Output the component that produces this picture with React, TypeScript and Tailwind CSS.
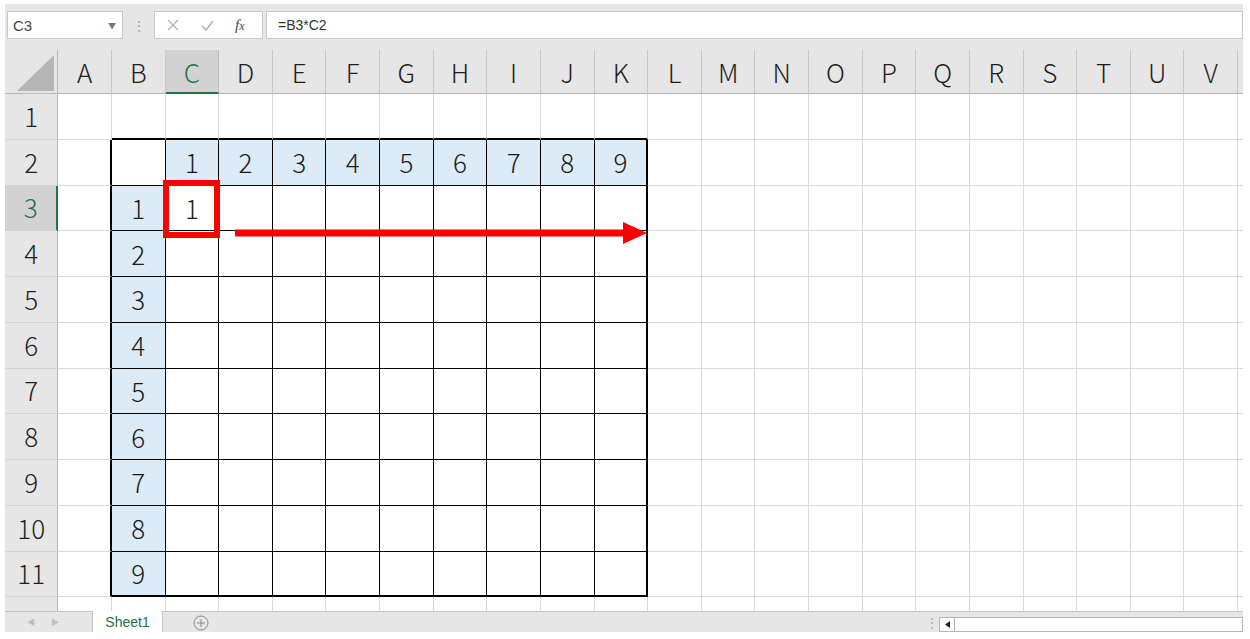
import React from "react";

const COLS = "ABCDEFGHIJKLMNOPQRSTUVW".split("");
const ROWS = [1, 2, 3, 4, 5, 6, 7, 8, 9, 10, 11, 12];
const GRID = "border-[#dadada]";

// table sits in B2:K11, header row 2 and header column B shaded blue
function cellClass(r: number, c: number) {
  const inTable = r >= 2 && r <= 11 && c >= 1 && c <= 10;
  let right = `border-r ${GRID}`;
  let bottom = `border-b ${GRID}`;
  if (inTable) {
    right = c === 10 ? "border-r-2 border-r-black" : "border-r border-r-black";
    bottom = r === 11 ? "border-b-2 border-b-black" : "border-b border-b-black";
  } else {
    if (c === 0 && r >= 2 && r <= 11) right = "border-r-2 border-r-black";
    if (r === 1 && c >= 1 && c <= 10) bottom = "border-b-2 border-b-black";
  }
  const blue =
    (r === 2 && c >= 2 && c <= 10) || (c === 1 && r >= 3 && r <= 11)
      ? "bg-[#ddebf7]"
      : "";
  return `relative flex h-full w-[53.64px] shrink-0 items-center justify-center box-border ${right} ${bottom} ${blue}`;
}

function cellText(r: number, c: number) {
  if (r === 2 && c >= 2 && c <= 10) return String(c - 1);
  if (c === 1 && r >= 3 && r <= 11) return String(r - 2);
  if (r === 3 && c === 2) return "1";
  return "";
}

export default function App() {
  return (
    <div className="h-[639px] w-[1250px] overflow-hidden bg-white pl-[5px] pr-[7px] pt-[4px] font-['Noto_Sans_CJK_JP','Liberation_Sans',sans-serif] text-[#1a1a1a]">
      {/* Formula bar */}
      <div className="flex h-[46px] items-start bg-[#e6e6e6] pt-[7px]">
        <div className="ml-[2px] flex h-[28px] w-[116px] items-center justify-between border border-[#c8c8c8] bg-white pl-[5px] pr-[6px] pt-[2px]">
          <span className="font-['Liberation_Sans',sans-serif] text-[15px] text-[#444]">
            C3
          </span>
          <span className="text-[8px] text-[#777]">▼</span>
        </div>
        <div className="flex h-[28px] w-[31px] items-center justify-center text-[14px] text-[#a8a8a8]">
          ⋮
        </div>
        <div className="flex h-[28px] w-[109px] items-center border border-[#c8c8c8] bg-white">
          <svg className="ml-[12px]" width="12" height="12" viewBox="0 0 12 12" stroke="#b4b4b4" strokeWidth="1.3" fill="none">
            <line x1="1" y1="1" x2="11" y2="11" />
            <line x1="11" y1="1" x2="1" y2="11" />
          </svg>
          <svg className="ml-[22px]" width="13" height="11" viewBox="0 0 13 11" stroke="#b4b4b4" strokeWidth="1.5" fill="none">
            <polyline points="1,6 5,10 12,1" />
          </svg>
          <span className="ml-[21px] font-['Liberation_Serif',serif] text-[15px] italic text-[#444]">
            f<span className="text-[12px]">x</span>
          </span>
        </div>
        <div className="ml-[3px] flex h-[28px] flex-1 items-center border border-[#c8c8c8] bg-white pl-[11px]">
          <span className="font-['Liberation_Sans',sans-serif] text-[14px] text-[#333]">
            =B3*C2
          </span>
        </div>
      </div>

      {/* Column headers */}
      <div className="flex h-[44px] overflow-hidden bg-[#e6e6e6] font-light">
        <div className="flex h-full w-[53.3px] shrink-0 items-end justify-end border-b border-r border-[#b8b8b8] pb-[2px] pr-[3px]">
          <svg width="37" height="36" viewBox="0 0 37 36">
            <polygon points="37,0 37,36 0,36" fill="#b5b5b5" />
          </svg>
        </div>
        {COLS.map((col, c) =>
          c === 2 ? (
            <div
              key={col}
              className="flex h-full w-[53.64px] shrink-0 items-center justify-center border-b-2 border-r border-b-[#217346] border-r-[#c0c0c0] bg-[#d2d2d2] text-[26px] text-[#217346]"
            >
              {col}
            </div>
          ) : (
            <div
              key={col}
              className="flex h-full w-[53.64px] shrink-0 items-center justify-center border-b border-r border-b-[#b0b0b0] border-r-[#c8c8c8] text-[26px] text-[#1f1f1f]"
            >
              {col}
            </div>
          )
        )}
      </div>

      {/* Sheet body */}
      <div className="relative h-[517px] overflow-hidden font-light">
        {ROWS.map((r) => (
          <div key={r} className="flex h-[45.75px]">
            {r === 3 ? (
              <div className="flex h-full w-[53.3px] shrink-0 items-center justify-center border-b border-r-2 border-b-[#d0d0d0] border-r-[#217346] bg-[#d2d2d2] pb-[2px] text-[26px] text-[#217346]">
                {r}
              </div>
            ) : (
              <div className="flex h-full w-[53.3px] shrink-0 items-center justify-center border-b border-r border-b-[#d4d4d4] border-r-[#b8b8b8] bg-[#e6e6e6] pb-[2px] text-[26px] text-[#1f1f1f]">
                {r}
              </div>
            )}
            {COLS.map((col, c) => (
              <div key={col} className={cellClass(r, c)}>
                <span className="text-[26px] leading-none">{cellText(r, c)}</span>
                {r === 3 && c === 2 && (
                  <div className="absolute -bottom-[8px] -left-[3px] -right-[2px] -top-[6px] z-10 border-[6px] border-[#ff0000]" />
                )}
              </div>
            ))}
          </div>
        ))}

        {/* Red arrow */}
        <svg
          className="absolute left-[230px] top-[127px] z-10"
          width="412"
          height="24"
          viewBox="0 0 412 24"
        >
          <rect x="0" y="8.5" width="390" height="7" fill="#ff0000" />
          <polygon points="388,1 412,12 388,23" fill="#ff0000" />
        </svg>
      </div>

      {/* Sheet tabs */}
      <div className="flex h-[21px] border-t border-[#c4c4c4] bg-[#e6e6e6]">
        <div className="flex w-[88px] items-center border-r border-[#c4c4c4] pl-[22px] text-[8px] text-[#bdbdbd]">
          <span>◀</span>
          <span className="ml-[16px]">▶</span>
        </div>
        <div className="-mt-px flex w-[70px] items-center justify-center border-r border-[#c4c4c4] bg-white pt-[2px] font-['Liberation_Sans',sans-serif] text-[14px] text-[#217346]">
          Sheet1
        </div>
        <div className="flex w-[76px] items-center justify-center pt-[2px]">
          <svg width="16" height="16" viewBox="0 0 16 16" fill="none" stroke="#8a8a8a" strokeWidth="1">
            <circle cx="8" cy="8" r="7" />
            <line x1="8" y1="4" x2="8" y2="12" />
            <line x1="4" y1="8" x2="12" y2="8" />
          </svg>
        </div>
        <div className="flex-1" />
        <div className="flex w-[15px] items-center justify-center text-[12px] text-[#a8a8a8]">
          ⋮
        </div>
        <div className="mt-[5px] flex h-[15px] w-[304px] border border-[#b4b4b4] bg-white">
          <div className="flex w-[15px] items-center justify-center border-r border-[#b4b4b4]">
            <svg width="5" height="7" viewBox="0 0 5 7">
              <polygon points="5,0 5,7 0,3.5" fill="#222" />
            </svg>
          </div>
        </div>
      </div>
    </div>
  );
}
